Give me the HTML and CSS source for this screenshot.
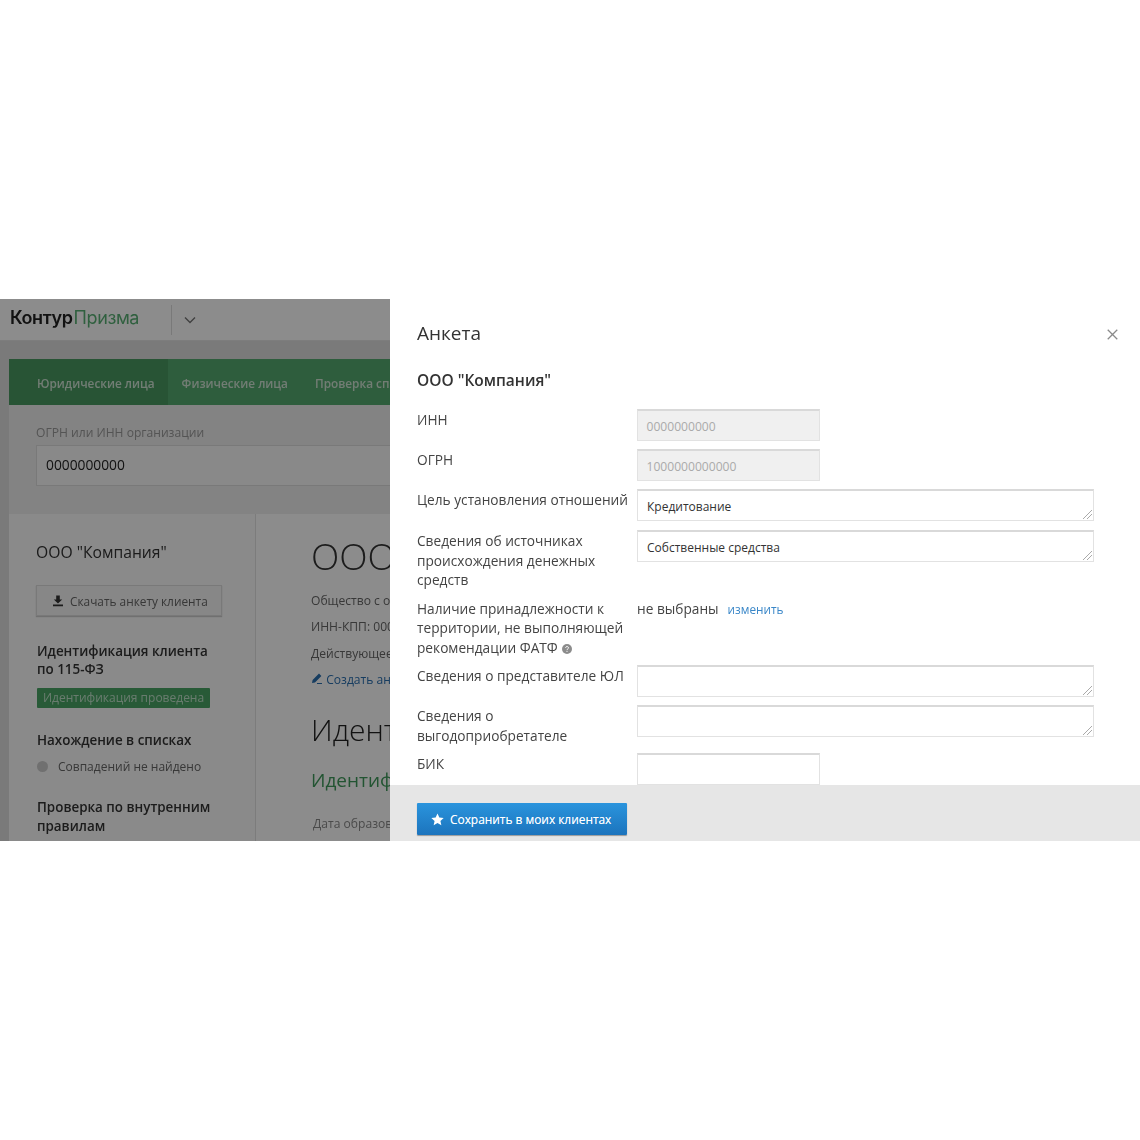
FILE: index.html
```html
<!DOCTYPE html>
<html lang="ru">
<head>
<meta charset="utf-8">
<title>Анкета</title>
<link rel="stylesheet" href="styles.css">
</head>
<body>
<div class="shot">
  <div class="app">
    <header class="topbar">
      <div class="logo"><span class="logo-a">Контур</span><span class="logo-b">Призма</span></div>
      <div class="switch">
        <svg width="12" height="8" viewBox="0 0 12 8"><path d="M1 1.500l5 5 5-5" fill="none" stroke="#777" stroke-width="1.400"/></svg>
      </div>
    </header>
    <div class="card">
      <nav class="tabs">
        <span class="tab active">Юридические лица</span>
        <span class="tab">Физические лица</span>
        <span class="tab third">Проверка списков</span>
      </nav>
      <div class="search">
        <div class="search-label">ОГРН или ИНН организации</div>
        <div class="search-input">0000000000</div>
      </div>
      <div class="columns">
        <aside class="side">
          <div class="side-title">ООО "Компания"</div>
          <div class="dl-btn">
            <svg width="12" height="12" viewBox="0 0 12 12"><path d="M4.200 0.500h3.600v4h2.400L6 8.400 1.800 4.500h2.400zM1 9.600h10v1.600H1z" fill="#333"/></svg>
            <span>Скачать анкету клиента</span>
          </div>
          <h4 class="side-h first">Идентификация клиента по 115-ФЗ</h4>
          <div class="badge">Идентификация проведена</div>
          <h4 class="side-h lists">Нахождение в списках</h4>
          <div class="status"><i class="dot"></i><span>Совпадений не найдено</span></div>
          <h4 class="side-h rules">Проверка по внутренним правилам</h4>
        </aside>
        <main class="main">
          <div class="big">ООО "Компания"</div>
          <p class="line l1">Общество с ограниченной ответственностью</p>
          <p class="line">ИНН-КПП: 0000000000-000000000</p>
          <p class="line">Действующее предприятие</p>
          <p class="line link"><svg width="12" height="12" viewBox="0 0 12 12"><path d="M1 11l.6-3L8 1.600 10.400 4 4 10.400zM6 11h5v1H6z" fill="#2a6fb0"/></svg> Создать анкету</p>
          <div class="big2">Идентификация</div>
          <div class="green">Идентификация проведена</div>
          <p class="line date">Дата образования</p>
        </main>
      </div>
    </div>
    <div class="overlay"></div>
  </div>
  <section class="drawer">
    <div class="drawer-body">
      <div class="drawer-head">
        <h2>Анкета</h2>
        <svg class="close" width="12" height="12" viewBox="0 0 12 12"><path d="M.8.8l10.400 10.400M11.200.8L.8 11.200" fill="none" stroke="#8a8a8a" stroke-width="1.400"/></svg>
      </div>
      <h3 class="company">ООО "Компания"</h3>
      <div class="form">
        <div class="lbl">ИНН</div>
        <div class="field short disabled">0000000000</div>
        <div class="lbl">ОГРН</div>
        <div class="field short disabled">1000000000000</div>
        <div class="lbl tall">Цель установления отношений</div>
        <div class="field area">Кредитование<svg class="grip" width="9" height="9" viewBox="0 0 9 9"><path d="M0 9l9-9M4 9l5-5" stroke="#aaa" fill="none"/></svg></div>
        <div class="lbl">Сведения об источниках происхождения денежных средств</div>
        <div class="field area">Собственные средства<svg class="grip" width="9" height="9" viewBox="0 0 9 9"><path d="M0 9l9-9M4 9l5-5" stroke="#aaa" fill="none"/></svg></div>
        <div class="lbl">Наличие принадлежности к территории, не выполняющей рекомендации ФАТФ <svg class="help" width="10" height="10" viewBox="0 0 10 10"><circle cx="5" cy="5" r="5" fill="#8c8c8c"/><path d="M3.600 3.900c0-1.800 2.900-1.800 2.900-.1 0 1.100-1.500 1.100-1.500 2.300M5 6.900v1" stroke="#fff" fill="none"/></svg></div>
        <div class="plain"><span>не выбраны</span><a class="change">изменить</a></div>
        <div class="lbl">Сведения о представителе ЮЛ</div>
        <div class="field area"><svg class="grip" width="9" height="9" viewBox="0 0 9 9"><path d="M0 9l9-9M4 9l5-5" stroke="#aaa" fill="none"/></svg></div>
        <div class="lbl">Сведения о выгодоприобретателе</div>
        <div class="field area"><svg class="grip" width="9" height="9" viewBox="0 0 9 9"><path d="M0 9l9-9M4 9l5-5" stroke="#aaa" fill="none"/></svg></div>
        <div class="lbl">БИК</div>
        <div class="field short"></div>
      </div>
    </div>
    <footer class="drawer-foot">
      <div class="save">
        <svg width="13" height="13" viewBox="0 0 24 24"><path d="M12 1l3.400 7.400 8 .9-6 5.400 1.700 8L12 18.600 4.900 22.700l1.700-8-6-5.400 8-.9z" fill="#fff"/></svg>
        <span>Сохранить в моих клиентах</span>
      </div>
    </footer>
  </section>
</div>
</body>
</html>
```
FILE: styles.css
```css
* { box-sizing: border-box; }
html, body { margin: 0; background: #fff; }
body { padding: 299px 0; height: 1140px; font-family: "Open Sans", "Liberation Sans", sans-serif; color: #333; }
.shot { display: flex; height: 542px; overflow: hidden; }

/* Background application */
.app { position: relative; width: 390px; flex: none; overflow: hidden; background: #dedede; display: flex; flex-direction: column; filter: blur(.45px); }
.app * { white-space: nowrap; }
.topbar { display: flex; flex: none; align-items: center; height: 42px; background: #fff; border-bottom: 1px solid #e4e4e4; padding-left: 10px; }
.logo { width: 161px; font-family: "Inter", "Liberation Sans", sans-serif; font-size: 18px; letter-spacing: -.4px; padding-bottom: 5px; }
.logo-a { color: #222; font-weight: 600; }
.logo-b { color: #58b074; margin-left: 1px; }
.switch { height: 30px; border-left: 1px solid #ddd; padding: 0 12px; display: flex; align-items: center; }
.card { margin: 18px 0 0 9px; background: #eeeeee; flex: 1; display: flex; flex-direction: column; min-height: 0; }
.tabs { display: flex; flex: none; height: 46px; background: #55a96f; align-items: center; font-size: 11.800px; font-weight: 600; color: #cfe3d4; }
.tab { padding: 1px 14px 0; height: 100%; display: flex; align-items: center; }
.tab.active { padding: 1px 13px 0 28px; background: #4a9a62; }
.tab.third { margin-left: -1px; }
.search { flex: none; padding: 20px 0 0 27px; height: 109px; }
.search-label { font-size: 12.100px; line-height: 16px; color: #999; }
.search-input { margin-top: 4px; width: 600px; height: 41px; background: #f9f9f9; border: 1px solid #ddd; padding-left: 9px; font-size: 13.800px; line-height: 38px; color: #222; }
.columns { display: flex; flex: 1; background: #fff; }
.side { width: 247px; flex: none; padding: 27px 0 0 27px; background: #fbfbfb; border-right: 1px solid #e2e2e2; }
.side-title { font-size: 15.700px; line-height: 22px; color: #333; }
.dl-btn { margin-top: 22px; width: 186px; height: 31px; display: flex; align-items: center; gap: 6px; padding-left: 15px; border: 1px solid #ddd; background: #f6f6f6; font-size: 11.850px; color: #666; box-shadow: 0 1px 1px #ccc; }
.side-h { margin: 0 0 0 1px; font-size: 13.400px; line-height: 18.500px; font-weight: 600; color: #333; }
.app .side-h { white-space: normal; width: 190px; }
.side-h.first { margin-top: 26px; line-height: 18px; }
.side-h.lists { margin-top: 23px; }
.side-h.rules { margin-top: 21px; line-height: 19px; }
.badge { margin: 10px 0 0 1px; width: 173px; height: 20px; line-height: 19px; padding-left: 6px; font-size: 12px; background: #49a564; color: #bfe0c9; border-radius: 1px; }
.status { display: flex; align-items: center; gap: 10px; margin: 7px 0 0 1px; height: 20px; font-size: 12px; color: #666; }
.dot { width: 11px; height: 11px; border-radius: 50%; background: #ccc; }
.main { padding: 17px 0 0 55px; flex: none; width: 500px; }
.big { font-size: 37px; line-height: 50px; font-weight: 300; color: #333; }
.line { margin: 9.300px 0 0; font-size: 12.100px; line-height: 17px; color: #666; }
.line.l1 { margin-top: 11px; }
.link { color: #2a6fb0; }
.big2 { margin-top: 21px; font-size: 30px; line-height: 42px; font-weight: 300; color: #222; }
.green { margin-top: 15px; font-size: 19px; line-height: 28px; color: #3f9a5b; }
.line.date { margin-top: 21px; margin-left: 2px; color: #888; }
.overlay { position: absolute; inset: 0; background: rgba(0,0,0,.45); }

/* Drawer */
.drawer { flex: 1; display: flex; flex-direction: column; background: #fff; min-width: 0; }
.drawer-body { height: 486px; padding: 0 46px 0 27px; overflow: hidden; filter: blur(.25px); }
.drawer-head { display: flex; justify-content: space-between; align-items: center; height: 70px; position: relative; padding-bottom: 3px; }
.drawer-head h2 { margin: 0; font-size: 19px; font-weight: 400; color: #333; }
.close { position: absolute; right: -24px; top: 30px; width: 11px; height: 11px; }
.company { margin: 0; font-size: 15.500px; line-height: 22px; font-weight: 600; color: #333; }
.form { display: grid; grid-template-columns: 220px 457px; row-gap: 8px; margin-top: 18px; }
.lbl { font-size: 13.700px; line-height: 19.500px; padding-top: 1px; color: #444; }
.lbl.tall { min-height: 33px; }
.field { position: relative; height: 32px; border: 1px solid #e2e2e2; border-top: 2px solid #d9d9d9; padding-left: 9px; font-size: 12px; line-height: 32px; color: #333; background: #fff; }
.short { width: 183px; }
.area { width: 457px; }
.disabled { background: #f0f0f0; color: #aaa; padding-left: 8.500px; font-size: 12.100px; }
.grip { position: absolute; right: 1px; bottom: 1px; }
.plain { font-size: 13.700px; line-height: 19.500px; padding-top: 1px; color: #444; }
.change { margin-left: 9px; font-size: 11.800px; color: #3a87c8; }
.help { vertical-align: -1px; margin-left: 1px; }
.drawer-foot { height: 56px; background: #e6e6e6; padding: 18px 0 0 27px; }
.save { display: flex; align-items: center; gap: 6px; width: 210px; height: 32px; padding-left: 14px; background: linear-gradient(#2a94dd, #1c74bd); border-radius: 1px; font-size: 11.900px; font-weight: 500; color: #fff; text-shadow: 0 0 .5px rgba(255,255,255,.6); box-shadow: 0 1px 1px #999; }
```
